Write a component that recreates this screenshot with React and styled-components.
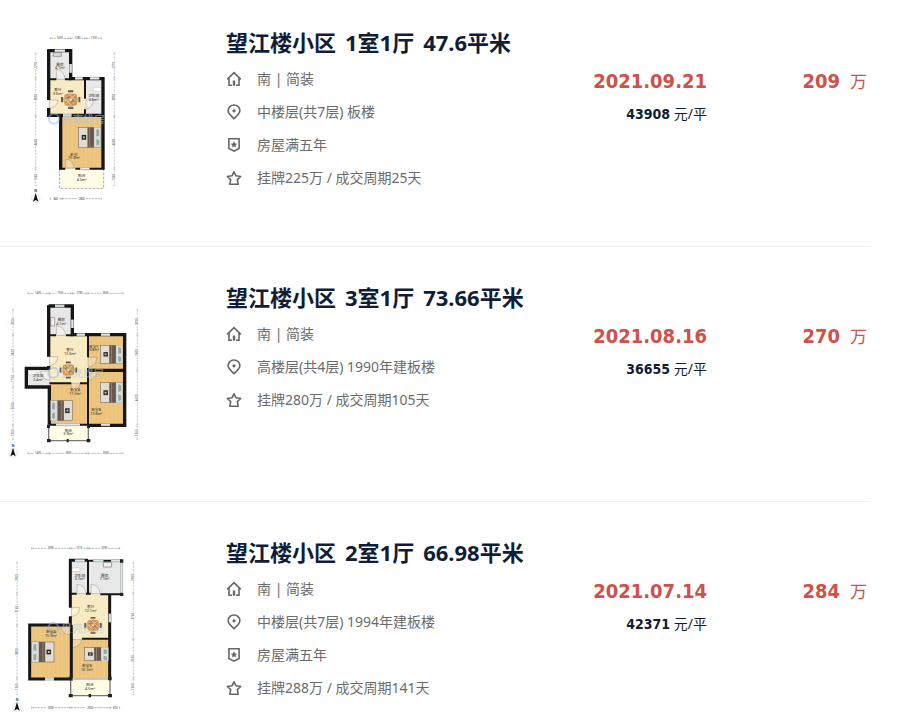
import React from "react";
import styled, { createGlobalStyle } from "styled-components";

const GlobalStyle = createGlobalStyle`
  body {
    margin: 0;
    background: #fff;
    color: #101d37;
    font-family: "Noto Sans", "Noto Sans CJK SC", sans-serif;
    font-size: 14px;
  }
`;

const List = styled.ul`
  list-style: none;
  margin: 0 38px 0 0;
  padding: 0;
`;

const Row = styled.li`
  display: grid;
  grid-template-columns: 160px minmax(0, 1fr) 120px 160px;
  align-items: start;
  padding: 33px 3px 37px 0;
  border-bottom: 1px solid #f0f0f0;

  &:first-child {
    padding-top: 25px;
  }

  &:last-child {
    padding-bottom: 0;
    border-bottom: 0;
  }
`;

const PlanLink = styled.a`
  display: block;
`;

const PlanDrawing = styled.svg`
  display: block;
  width: 160px;
  height: 184px;
  font-family: "Noto Sans", "Noto Sans CJK SC", sans-serif;
`;

const Info = styled.div`
  margin-left: 66px;
`;

const Title = styled.h2`
  margin: 0 0 3px;
  font-size: 22px;
  line-height: 34px;
  font-weight: 700;
  white-space: nowrap;
`;

const TitleLink = styled.a`
  display: flex;
  gap: 9px;
  color: #101d37;
  text-decoration: none;
`;

const Details = styled.ul`
  list-style: none;
  margin: 0;
  padding: 0;
`;

const Detail = styled.li`
  display: flex;
  align-items: center;
  gap: 15px;
  height: 33px;
  line-height: 33px;
  color: #6b6b6b;
  white-space: nowrap;
`;

const IconDrawing = styled.svg`
  flex: none;
  width: 16px;
  height: 16px;
  fill: none;
  stroke: #666;
  stroke-width: 1.6;
`;

const Deal = styled.div`
  padding-top: 41px;
  text-align: right;
  line-height: 31px;
  white-space: nowrap;
`;

const Figure = styled.strong`
  font-family: "DejaVu Sans Condensed", "DejaVu Sans", sans-serif;
  font-weight: 700;
  font-size: ${(p) => (p.$large ? "20px" : "14px")};
`;

const DealDate = styled.div`
  color: #d0504a;
`;

const UnitPrice = styled.div`
  font-weight: 400;
`;

const Total = styled.div`
  display: flex;
  justify-content: flex-end;
  align-items: baseline;
  gap: 10px;
  padding-top: 41px;
  line-height: 31px;
  color: #d0504a;
  font-size: 17px;
`;

const icons = {
  house: (
    <>
      <path d="M1.2 8.4 8 1.7l6.8 6.7M3 7v7.2h3M13 7v7.2h-3" />
      <path d="M8 9.5v5.2" strokeWidth="2.4" />
    </>
  ),
  pin: (
    <>
      <path d="M8 14.6C4.6 11.5 2.1 9.4 2.1 6.7a5.9 5.7 0 0 1 11.8 0c0 2.7-2.5 4.8-5.9 7.9Z" />
      <circle cx="8" cy="6.8" r="1.6" fill="#666" stroke="none" />
    </>
  ),
  badge: (
    <>
      <path d="M2.9 1.8h10.2v9.7L8 14.1l-5.1-2.6Z" />
      <path
        d="m8 4.3 1 2.1 2.3.3-1.7 1.5.5 2.3L8 9.3l-2.1 1.2.5-2.3-1.7-1.5L7 6.4Z"
        fill="#666"
        stroke="none"
      />
    </>
  ),
  star: (
    <path d="m8 1.8 2 4 4.7.7-3.4 3.1.9 4.6H3.8l.9-4.6-3.4-3.1 4.7-.7Z" strokeLinejoin="round" />
  ),
};

function Icon({ name }) {
  return (
    <IconDrawing viewBox="0 0 16 16" aria-hidden="true">
      {icons[name]}
    </IconDrawing>
  );
}

function Room({ x, y, w, h, fill }) {
  return <rect x={x} y={y} width={w} height={h} fill={fill} />;
}

function Walls({ d, width = 9 }) {
  return <path d={d} fill="none" stroke="#161616" strokeWidth={width} />;
}

function Windows({ d }) {
  return (
    <>
      <path d={d} fill="none" stroke="#b5b9b9" strokeWidth="9" />
      <path d={d} fill="none" stroke="#edf0ef" strokeWidth="3" />
    </>
  );
}

function Doors({ d }) {
  return <path d={d} fill="#fff" fillOpacity="0.3" stroke="#999284" strokeWidth="1.5" />;
}

function RoomName({ x, y, name, area }) {
  return (
    <g fontSize="11" fontWeight="500" fill="#4a4236" textAnchor="middle">
      <text x={x} y={y}>{name}</text>
      <text x={x} y={y + 11}>{area}</text>
    </g>
  );
}

function Bed({ x, y, w, h, flip }) {
  return (
    <g transform={flip ? `translate(${2 * x + w} 0) scale(-1 1)` : undefined}>
      <rect x={x} y={y} width={w} height={h} fill="#e2dcd2" stroke="#62564c" strokeWidth="1.5" />
      <rect x={x + w * 0.4} y={y} width={w * 0.3} height={h} fill="#68584d" />
      <rect x={x + w * 0.48} y={y} width={w * 0.04} height={h} fill="#93857a" />
      <rect x={x + w * 0.14} y={y + h * 0.38} width={w * 0.2} height={h * 0.24} fill="#25221f" />
      <rect x={x + w * 0.19} y={y + h * 0.45} width={w * 0.09} height={h * 0.1} fill="#c7bbb0" />
      <rect x={x + w * 0.7} y={y} width={w * 0.3} height={h} fill="#d6dad4" />
      <path
        d={`M${x + w * 0.78} ${y + 3}l${w * 0.18} 4v${h * 0.32}l-${w * 0.18} 3zm0 ${h * 0.5}l${w * 0.18} 4v${h * 0.28}l-${w * 0.18} 3z`}
        fill="#9da8a6"
        stroke="#eef1ec"
        strokeWidth="2"
      />
    </g>
  );
}

function DiningTable({ x, y, size = 1 }) {
  return (
    <g transform={`translate(${x} ${y}) scale(${size})`}>
      <path d="M-8-25H8M-8 25H8M-26-8V8M26-8V8" stroke="#5d5b57" strokeWidth="6" />
      <path d="M-6-21H6M-6 21H6M-21-6V6M21-6V6" stroke="#c1b9aa" strokeWidth="4" />
      <rect x="-19" y="-18" width="38" height="36" rx="8" fill="#cb9556" />
      <path d="M-14-13 12 14M-5-16 16 5M-17-3 1 16M13-14-14 14M2-16-17 4" stroke="#ecca92" strokeWidth="3" />
      <path d="m-11-4 9-6m3 17 10-5" stroke="#8a817a" strokeWidth="5" />
      <circle r="3" fill="#fff1c6" />
    </g>
  );
}

function WoodGrain({ x, y, w, h }) {
  const lines = [];
  for (let i = 12; i < w; i += 13) {
    lines.push(`M${x + i} ${y}v${h}`);
  }
  return <path d={lines.join("")} stroke="#dfb167" strokeWidth="1" opacity="0.5" />;
}

function Watermark({ x, y }) {
  return (
    <g opacity="0.5">
      <circle cx={x} cy={y} r="15" fill="none" stroke="#8ab4e9" strokeWidth="6" />
      <text x={x + 24} y={y + 12} fontSize="32" fontWeight="700" fill="#b4c9df">
        贝壳找房
      </text>
    </g>
  );
}

function TopScale({ y, stops, values }) {
  return (
    <g fontSize="8" fontWeight="500" fill="#555" textAnchor="middle">
      {values.map((value, i) => {
        const a = stops[i];
        const b = stops[i + 1];
        const m = (a + b) / 2;
        return (
          <g key={i}>
            <path
              d={`M${a + 2} ${y}H${m - 12}M${m + 12} ${y}H${b - 2}M${a + 2} ${y - 3}v6M${b - 2} ${y - 3}v6`}
              stroke="#777"
              strokeWidth="1.5"
              strokeDasharray="7 2"
            />
            <text x={m} y={y + 3}>{value}</text>
          </g>
        );
      })}
    </g>
  );
}

function SideScale({ x, stops, values }) {
  return (
    <g transform={`rotate(-90) translate(0 ${x})`} fontSize="9" fontWeight="500" fill="#555" textAnchor="middle">
      {values.map((value, i) => {
        const a = -stops[i];
        const b = -stops[i + 1];
        const m = (a + b) / 2;
        return (
          <g key={i}>
            <path
              d={`M${a - 2} 0H${m + 12}M${m - 12} 0H${b + 2}M${a - 2}-3v6M${b + 2}-3v6`}
              stroke="#999"
              strokeWidth="1.5"
              strokeDasharray="7 3"
            />
            <text x={m} y="3">{value}</text>
          </g>
        );
      })}
    </g>
  );
}

function Compass({ x, y }) {
  return (
    <g>
      <text x={x} y={y - 16} fontSize="10" fontWeight="700" fill="#333" textAnchor="middle">N</text>
      <circle cx={x} cy={y + 2} r="13" fill="none" stroke="#bbb" strokeWidth="1" />
      <path d={`M${x} ${y - 14}l8 26-8-5-8 5Z`} fill="#111" />
    </g>
  );
}

const TILE = "#e7e8e7";
const LIVING = "#f8ebc4";
const WOOD = "#edc680";
const BALCONY = "#fffde6";

function OneRoomPlan() {
  return (
    <PlanDrawing viewBox="0 15 480 552" role="img" aria-label="1室1厅 户型图">
      <Room x={148} y={94} w={64} h={86} fill={TILE} />
      <Room x={148} y={180} w={108} h={104} fill={LIVING} />
      <Room x={258} y={178} w={50} h={106} fill={TILE} />
      <Room x={186} y={286} w={122} h={160} fill={WOOD} />
      <WoodGrain x={186} y={286} w={120} h={160} />
      <Room x={182} y={449} w={128} h={53} fill={BALCONY} />
      <path d="M179 448V505H311V448" fill="none" stroke="#aaa" strokeWidth="3" strokeDasharray="8 4" />
      <path d="M160 98h24v11h-24z" fill="#ddd" stroke="#777" strokeWidth="2" />
      <path d="M280 202h24v12h-24z" fill="#fff" stroke="#aaa" strokeWidth="1" />
      <Doors d="M169 178V148Q193 150 195 178ZM148 240h26q-2 22-26 24ZM258 268v-28h22q0 22-22 28ZM197 444v-27q22 1 25 27Z" />
      <Walls d="M146 92H212V176H309V288M146 88V240M146 264V286H189M182 284V448M309 286V448M214 286H313" width={10} />
      <Walls d="M146 178H169M195 178H214M255 178V236M255 268V286M178 446H196M226 446H241M268 446H313" width={6} />
      <Windows d="M164 92H195M212 132V158M225 175H248M270 175H298" />
      <Windows d="M189 286H214M241 446H268" />
      <Watermark x={162} y={296} />
      <Bed x={236} y={322} w={66} h={60} />
      <DiningTable x={212} y={239} />
      <RoomName x={180} y={137} name="厨房" area="4.1m²" />
      <RoomName x={174} y={213} name="客厅" area="9.6m²" />
      <RoomName x={281} y={231} name="卫生间" area="3.6m²" />
      <RoomName x={222} y={407} name="卧室" area="15.9m²" />
      <RoomName x={245} y={471} name="阳台" area="4.5m²" />
      <TopScale y={55} stops={[149, 209, 256, 306]} values={["1430", "1280", "1250"]} />
      <TopScale y={536} stops={[149, 185, 306]} values={["840", "2860"]} />
      <SideScale x={107} stops={[97, 175, 288, 445, 498]} values={["2270", "2850", "4400", "1360"]} />
      <SideScale x={343} stops={[97, 175, 288, 445, 498]} values={["2270", "2850", "4400", "1360"]} />
      <Compass x={107} y={533} />
    </PlanDrawing>
  );
}

function ThreeRoomPlan() {
  return (
    <PlanDrawing viewBox="0 0 480 552" role="img" aria-label="3室1厅 户型图">
      <Room x={148} y={83} w={68} h={84} fill={TILE} />
      <Room x={149} y={166} w={114} h={143} fill={LIVING} />
      <Room x={264} y={166} w={108} h={268} fill={WOOD} />
      <WoodGrain x={264} y={166} w={108} h={268} />
      <Room x={149} y={310} w={114} h={123} fill={WOOD} />
      <WoodGrain x={149} y={310} w={114} h={123} />
      <Room x={82} y={268} w={66} h={52} fill={TILE} />
      <Room x={147} y={435} w={119} h={46} fill={BALCONY} />
      <path d="M152 112h12v26h-12z" fill="#eee" stroke="#888" strokeWidth="2" />
      <path d="M86 273h22v11H86z" fill="#fff" stroke="#aaa" strokeWidth="1" />
      <Doors d="M169 166V137q25 3 28 29ZM149 230h25q-2 23-25 27ZM264 232h27q-2 25-27 30ZM264 272h28q-1 24-28 30ZM149 273h-27q2 25 27 29ZM213 310h26q0 20-26 26Z" />
      <Walls d="M146 78H217V164H374V436H264M146 76V230M146 258V265H79V321H148V434M374 271H264" width={10} />
      <Walls d="M146 166H168M198 166H220M264 164V232M264 264V434M148 310H214M240 310H266M149 434H168M239 434H264" width={6} />
      <Windows d="M165 78H193M217 119V144M230 164H255M303 164H330M303 434H330M168 434H239" />
      <path d="M146 438V482H265V438" fill="none" stroke="#777" strokeWidth="4" />
      <path d="M141 477h11v10h-11zM200 477h6v10h-6zM260 477h11v10h-11zM141 434h9v10h-9zM261 434h9v10h-9z" fill="#222" />
      <Watermark x={160} y={278} />
      <Bed x={301} y={196} w={67} h={54} />
      <Bed x={301} y={308} w={67} h={60} />
      <Bed x={152} y={362} w={66} h={60} flip />
      <DiningTable x={205} y={270} size={0.9} />
      <RoomName x={184} y={124} name="厨房" area="4.1m²" />
      <RoomName x={210} y={213} name="客厅" area="12.6m²" />
      <RoomName x={282} y={203} name="卧室C" area="9.8m²" />
      <RoomName x={114} y={292} name="卫生间" area="2.4m²" />
      <RoomName x={226} y={333} name="卧室A" area="11.3m²" />
      <RoomName x={289} y={393} name="卧室B" area="13.6m²" />
      <RoomName x={205} y={455} name="阳台" area="3.9m²" />
      <TopScale y={40} stops={[82, 146, 215, 262, 371]} values={["1400", "1500", "1290", "2600"]} />
      <TopScale y={520} stops={[82, 146, 263, 371]} values={["1400", "2600", "2600"]} />
      <SideScale x={39} stops={[86, 164, 271, 320, 436, 481]} values={["2000", "2400", "1150", "2600", "1260"]} />
      <SideScale x={412} stops={[86, 164, 271, 436, 481]} values={["2000", "2600", "4600", "1260"]} />
      <Compass x={39} y={517} />
    </PlanDrawing>
  );
}

function TwoRoomPlan() {
  return (
    <PlanDrawing viewBox="0 0 480 552" role="img" aria-label="2室1厅 户型图">
      <Room x={214} y={80} w={49} h={96} fill={TILE} />
      <Room x={266} y={80} w={98} h={98} fill={TILE} />
      <Room x={214} y={176} w={115} h={134} fill={LIVING} />
      <Room x={90} y={273} w={121} h={157} fill={WOOD} />
      <WoodGrain x={90} y={273} w={121} h={157} />
      <Room x={214} y={313} w={114} h={118} fill={WOOD} />
      <WoodGrain x={214} y={313} w={114} h={118} />
      <Room x={213} y={432} w={116} h={49} fill={BALCONY} />
      <path d="M216 99h24v10h-24z" fill="#fff" stroke="#999" strokeWidth="1" />
      <path d="M310 82h25v14h-25z" fill="#eee" stroke="#777" strokeWidth="2" />
      <Doors d="M231 176v-28q24 1 27 28ZM273 176v-28q24 1 27 28ZM214 218h25q-1 23-25 27ZM211 274h-27q1 24 27 26ZM216 313h29q-1 20-29 26Z" />
      <Walls d="M264 76H211V218M211 244V270H89V432H135M162 432H214V270M329 178V432" width={9} />
      <Walls d="M264 76V176M264 77H368M209 176H230M258 176H272M301 178H368M211 311H217M246 311H330" width={6} />
      <Windows d="M225 77H254M280 77H310M333 77H360M365 83V172M330 236V262M135 432H162" />
      <path d="M213 432H329" stroke="#b8b8a9" strokeWidth="4" />
      <path d="M212 435V482H330V435" fill="none" stroke="#777" strokeWidth="4" />
      <path d="M206 477h12v10h-12zM266 477h7v10h-7zM324 477h12v10h-12zM206 425h11v11h-11zM324 425h11v11h-11zM360 73h10v10h-10zM360 173h10v10h-10z" fill="#222" />
      <Watermark x={160} y={279} />
      <Bed x={96} y={321} w={66} h={60} flip />
      <Bed x={254} y={337} w={71} h={40} />
      <DiningTable x={279} y={271} size={0.9} />
      <RoomName x={239} y={125} name="卫生间" area="3.7m²" />
      <RoomName x={314} y={125} name="厨房" area="7.1m²" />
      <RoomName x={272} y={219} name="客厅" area="12.1m²" />
      <RoomName x={153} y={294} name="卧室A" area="15.9m²" />
      <RoomName x={261} y={397} name="卧室B" area="10.7m²" />
      <RoomName x={270} y={454} name="阳台" area="4.5m²" />
      <TopScale y={40} stops={[93, 211, 264, 361]} values={["2690", "1210", "2090"]} />
      <TopScale y={518} stops={[93, 211, 330, 361]} values={["2690", "2600", "810"]} />
      <SideScale x={51} stops={[80, 175, 270, 430, 481]} values={["2500", "2160", "3800", "1260"]} />
      <SideScale x={400} stops={[80, 175, 312, 430, 481]} values={["2500", "3760", "2630", "1260"]} />
      <Compass x={51} y={515} />
    </PlanDrawing>
  );
}

const deals = [
  {
    Plan: OneRoomPlan,
    title: ["望江楼小区", "1室1厅", "47.6平米"],
    details: [
      ["house", "南 | 简装"],
      ["pin", "中楼层(共7层) 板楼"],
      ["badge", "房屋满五年"],
      ["star", "挂牌225万 / 成交周期25天"],
    ],
    date: "2021.09.21",
    unit: "43908",
    total: "209",
  },
  {
    Plan: ThreeRoomPlan,
    title: ["望江楼小区", "3室1厅", "73.66平米"],
    details: [
      ["house", "南 | 简装"],
      ["pin", "高楼层(共4层) 1990年建板楼"],
      ["star", "挂牌280万 / 成交周期105天"],
    ],
    date: "2021.08.16",
    unit: "36655",
    total: "270",
  },
  {
    Plan: TwoRoomPlan,
    title: ["望江楼小区", "2室1厅", "66.98平米"],
    details: [
      ["house", "南 | 简装"],
      ["pin", "中楼层(共7层) 1994年建板楼"],
      ["badge", "房屋满五年"],
      ["star", "挂牌288万 / 成交周期141天"],
    ],
    date: "2021.07.14",
    unit: "42371",
    total: "284",
  },
];

export default function App() {
  return (
    <>
      <GlobalStyle />
      <main>
        <List>
          {deals.map(({ Plan, title, details, date, unit, total }) => (
            <Row key={date}>
              <PlanLink href="#">
                <Plan />
              </PlanLink>
              <Info>
                <Title>
                  <TitleLink href="#">
                    {title.map((part) => (
                      <span key={part}>{part}</span>
                    ))}
                  </TitleLink>
                </Title>
                <Details>
                  {details.map(([icon, text]) => (
                    <Detail key={icon}>
                      <Icon name={icon} />
                      <span>{text}</span>
                    </Detail>
                  ))}
                </Details>
              </Info>
              <Deal>
                <DealDate>
                  <Figure $large>{date}</Figure>
                </DealDate>
                <UnitPrice>
                  <Figure>{unit}</Figure> 元/平
                </UnitPrice>
              </Deal>
              <Total>
                <Figure $large>{total}</Figure>
                <span>万</span>
              </Total>
            </Row>
          ))}
        </List>
      </main>
    </>
  );
}
